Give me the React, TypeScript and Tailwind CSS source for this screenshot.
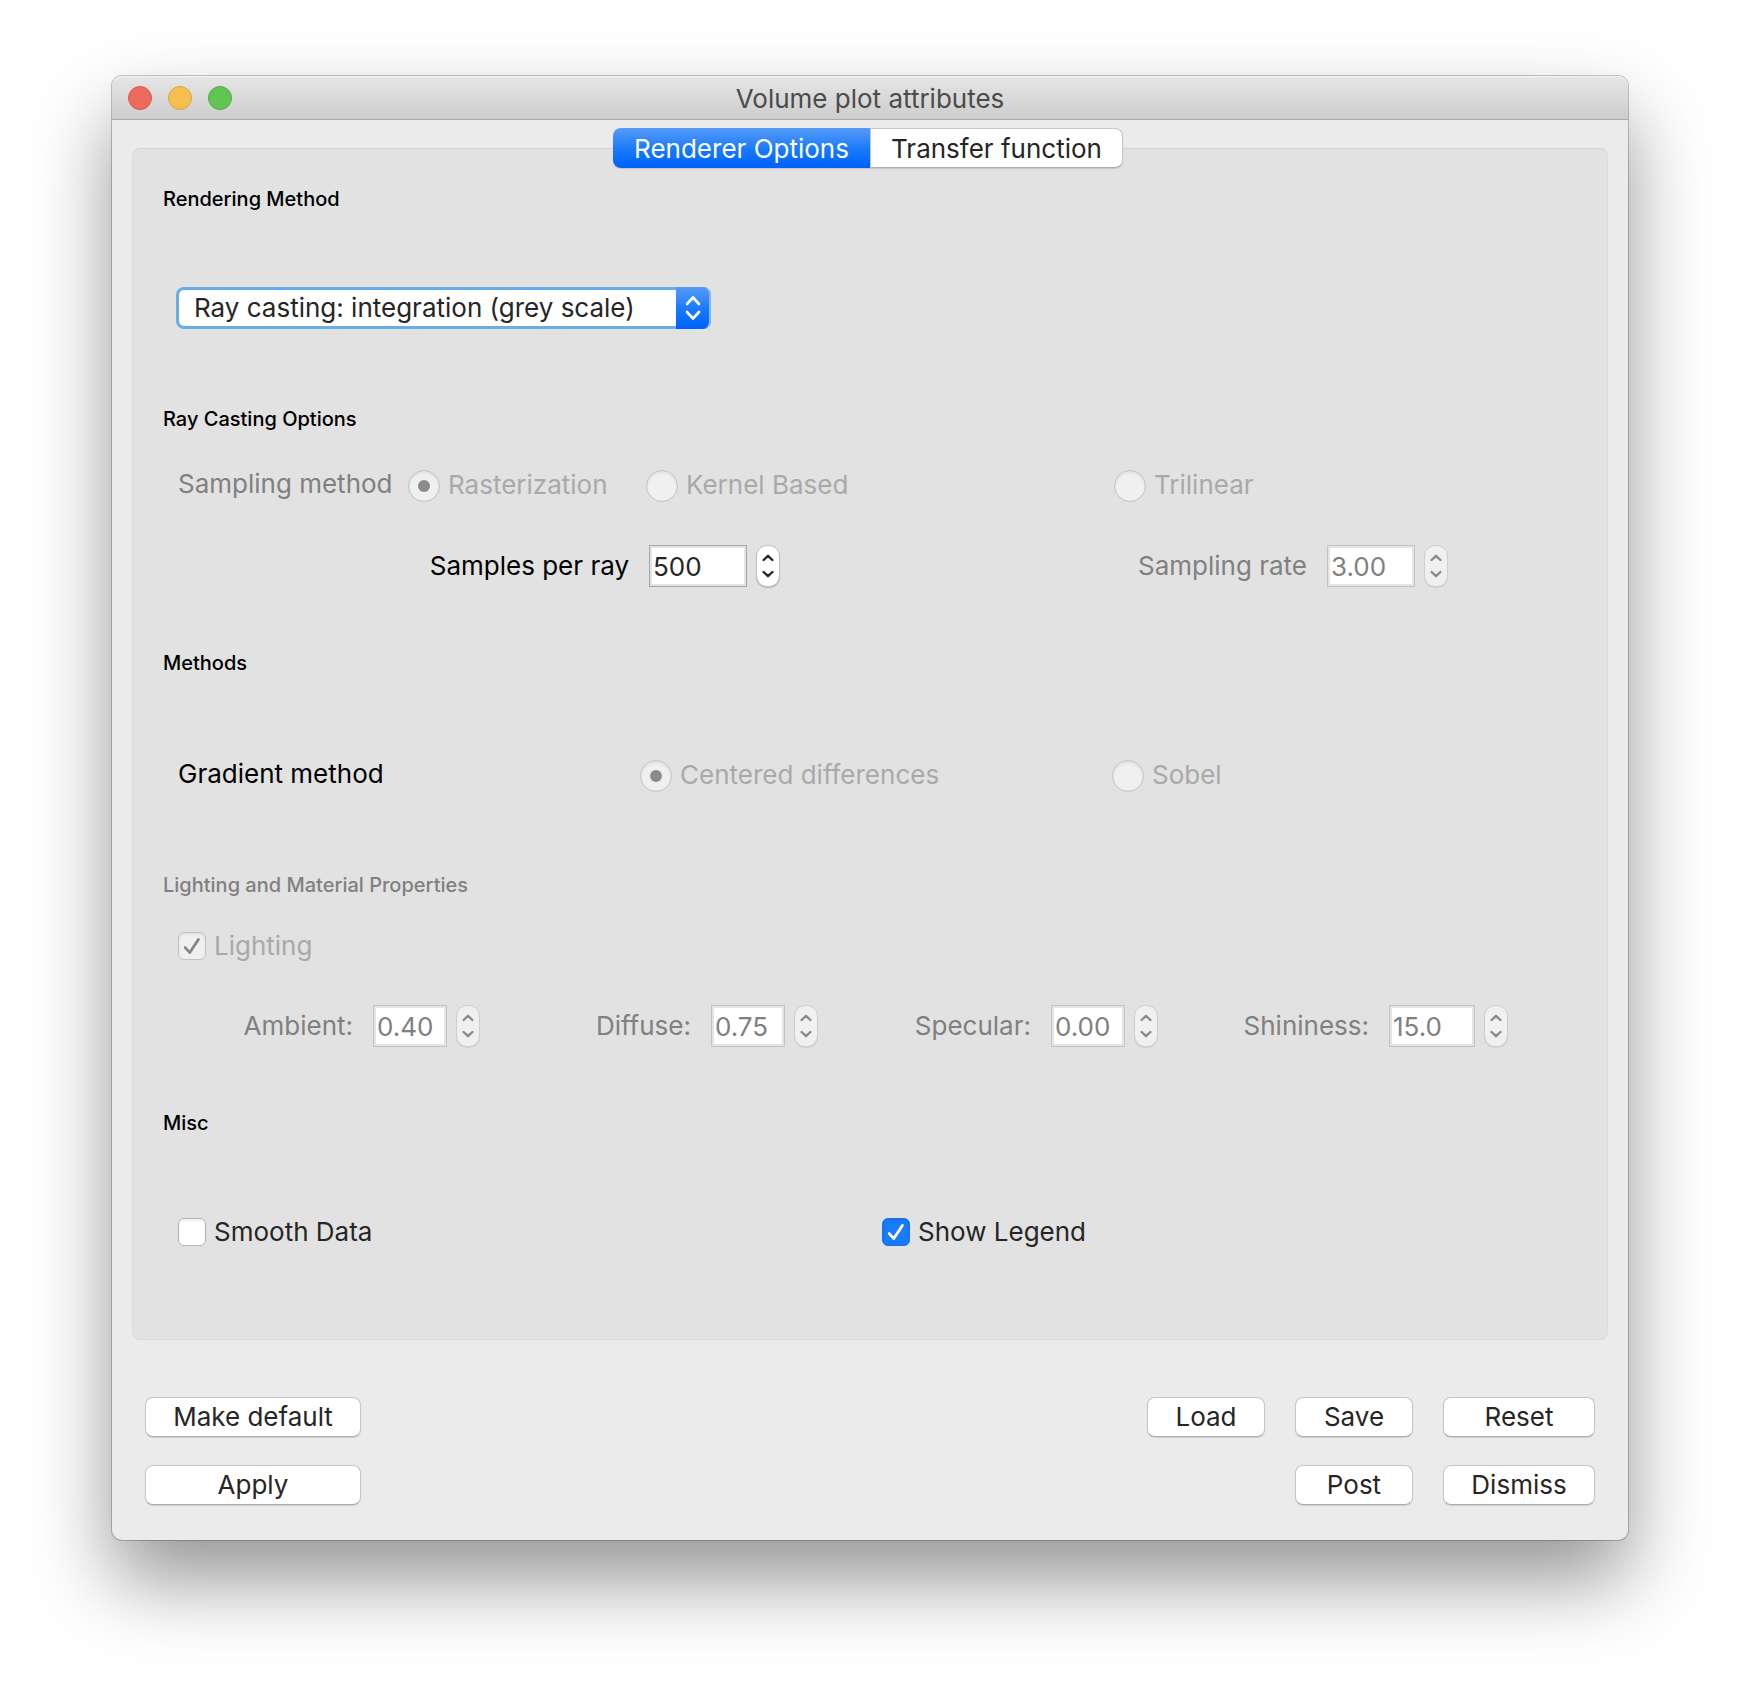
import { useState, type ReactNode } from "react";
import clsx from "clsx";

const lights = [
  { label: "Close", color: "bg-[#ed6a5e] border-[#d8574c]" },
  { label: "Minimize", color: "bg-[#f5bf4f] border-[#dca63c]" },
  { label: "Zoom", color: "bg-[#61c554] border-[#4fab43]" },
];

const methods = [
  "Ray casting: integration (grey scale)",
  "Ray casting: compositing",
  "Ray casting: SLIVR",
  "Splatting",
];

function Chevron({ up }: { up?: boolean }) {
  return (
    <svg viewBox="0 0 12 8" className="w-3 h-2" fill="none" stroke="currentColor" strokeWidth="2.4" strokeLinecap="round" strokeLinejoin="round">
      <path d={up ? "M1.6 6 6 1.8 10.4 6" : "M1.6 2 6 6.2 10.4 2"} />
    </svg>
  );
}

function Section({ title, disabled, className, children }: { title: string; disabled?: boolean; className?: string; children: ReactNode }) {
  return (
    <section>
      <h2 className={clsx("pl-[30px] text-[20px] leading-6 font-medium", disabled ? "text-[#808080]" : "text-black")}>{title}</h2>
      <div className={clsx("pl-[45px]", className)}>{children}</div>
    </section>
  );
}

function Radio({ name, label, checked }: { name: string; label: string; checked?: boolean }) {
  return (
    <label className="flex items-center gap-2 whitespace-nowrap text-[#a9a9a9]">
      <input
        type="radio"
        name={name}
        defaultChecked={checked}
        disabled
        className="appearance-none size-8 shrink-0 grid place-content-center rounded-full border border-[#c2c2c2] bg-[#f0f0f0] shadow-[inset_0_2px_3px_rgba(0,0,0,0.07)] before:size-3 before:rounded-full checked:before:bg-[#8b8b8b]"
      />
      <span className="-my-1 pb-0.5">{label}</span>
    </label>
  );
}

function Checkbox({ label, checked, disabled }: { label: string; checked?: boolean; disabled?: boolean }) {
  return (
    <label className={clsx("flex items-center gap-2 whitespace-nowrap", disabled ? "text-[#a9a9a9]" : "text-[#262626]")}>
      <span className="relative size-7 shrink-0">
        <input
          type="checkbox"
          defaultChecked={checked}
          disabled={disabled}
          className={clsx(
            "peer block appearance-none size-7 rounded-[6px] border shadow-[inset_0_2px_3px_rgba(0,0,0,0.07)]",
            disabled ? "border-[#c2c2c2] bg-[#f0f0f0]" : "border-[#b4b4b4] bg-white checked:border-[#1670f0] checked:bg-[#187bfb]"
          )}
        />
        <svg
          viewBox="0 0 28 28"
          className={clsx("absolute inset-0 size-7 pointer-events-none opacity-0 peer-checked:opacity-100", disabled ? "text-[#868686]" : "text-white")}
          fill="none"
          stroke="currentColor"
          strokeWidth="2.8"
          strokeLinecap="round"
          strokeLinejoin="round"
        >
          <path d="M7.2 15.6 11.8 20.6 20.4 7.4" />
        </svg>
      </span>
      {label}
    </label>
  );
}

function SpinBox({ id, label, value, width, disabled }: { id: string; label: string; value: string; width: string; disabled?: boolean }) {
  const [text, setText] = useState(value);
  const decimals = value.includes(".") ? value.split(".")[1].length : 0;
  const step = (dir: number) => setText((Number(text) + dir * 10 ** -decimals).toFixed(decimals));

  return (
    <div className="flex items-center justify-end">
      <label htmlFor={id} className={clsx("mr-5 whitespace-nowrap", disabled ? "text-[#808080]" : "text-black")}>{label}</label>
      <input
        id={id}
        value={text}
        disabled={disabled}
        onChange={(e) => setText(e.target.value)}
        className={clsx(
          "h-[42px] mr-[9px] pl-[3px] border bg-white outline-none shadow-[inset_0_0_0_2px_#e4e4e4]",
          width,
          disabled ? "border-[#c4c4c4] text-[#808080]" : "border-[#a6a6a6] text-[#262626]"
        )}
      />
      <div
        className={clsx(
          "flex flex-col w-6 h-[42px] rounded-[11px] border",
          disabled ? "border-[#cecece] bg-[#f0f0f0] text-[#8b8b8b] shadow-[0_1px_1px_rgba(0,0,0,0.08)]" : "border-[#c0c0c0] bg-white text-[#262626] shadow-[0_1px_1px_rgba(0,0,0,0.2)]"
        )}
      >
        <button aria-label={`Increase ${label}`} disabled={disabled} onClick={() => step(1)} className="flex-1 flex items-end justify-center pb-1">
          <Chevron up />
        </button>
        <button aria-label={`Decrease ${label}`} disabled={disabled} onClick={() => step(-1)} className="flex-1 flex items-start justify-center pt-1">
          <Chevron />
        </button>
      </div>
    </div>
  );
}

function PushButton({ width, children }: { width: string; children: ReactNode }) {
  return (
    <button className={clsx("h-10 rounded-lg border border-[#c6c6c6] border-b-[#adadad] bg-white text-[#262626] shadow-[0_1px_1px_rgba(0,0,0,0.12)]", width)}>
      {children}
    </button>
  );
}

export default function App() {
  const [tab, setTab] = useState("Renderer Options");

  return (
    <div className="min-h-screen bg-white px-28 pt-[76px] pb-[148px] font-['Inter',sans-serif] text-[26px] leading-8">
      <main className="rounded-[10px] bg-[#ebebeb] shadow-[0_0_0_1px_rgba(0,0,0,0.22),0_40px_80px_rgba(0,0,0,0.42)]">
        <header className="grid grid-cols-[1fr_auto_1fr] items-center h-11 px-4 rounded-t-[10px] border-b border-[#a8a8a8] bg-linear-to-b from-[#e6e6e6] to-[#cdcdcd] shadow-[inset_0_1px_0_#f4f4f4]">
          <div className="flex gap-4">
            {lights.map((l) => (
              <button key={l.label} aria-label={l.label} className={clsx("size-6 rounded-full border", l.color)} />
            ))}
          </div>
          <h1 className="pt-0.5 text-[#4b4b4b]">Volume plot attributes</h1>
        </header>

        <div className="px-5 pt-2">
          <div role="tablist" className="relative z-10 flex justify-center pr-1 -mb-5">
            {["Renderer Options", "Transfer function"].map((name) => (
              <button
                key={name}
                role="tab"
                aria-selected={tab === name}
                onClick={() => setTab(name)}
                className={clsx(
                  "h-10 pt-0.5 border first:w-[257px] last:w-[253px] first:rounded-l-lg last:rounded-r-lg shadow-[0_1px_1px_rgba(0,0,0,0.12)]",
                  tab === name
                    ? "border-transparent bg-linear-to-b from-[#559bf7] via-[#1a7bfa] to-[#0060fb] bg-origin-border text-white"
                    : "border-[#c6c6c6] border-b-[#adadad] bg-white text-[#262626]"
                )}
              >
                {name}
              </button>
            ))}
          </div>

          <div className="rounded-lg border border-[#dadada] border-t-[#d2d2d2] bg-[#e2e2e2] pt-[38px] pb-[91px]">
            <Section title="Rendering Method" className="pt-[76px] pb-[78px]">
              <div className="relative w-[535px] -ml-0.5">
                <select
                  aria-label="Rendering Method"
                  className="block appearance-none w-full h-[42px] pl-[15px] pr-10 rounded-lg border-3 border-[#67aee8] bg-white text-[#262626] outline-none"
                >
                  {methods.map((m) => (
                    <option key={m}>{m}</option>
                  ))}
                </select>
                <span className="absolute inset-y-0 right-0 w-[35px] flex items-center justify-center rounded-r-lg border-r-2 border-[#7db9ee] bg-linear-to-b from-[#559bf7] via-[#1a7bfa] to-[#0060fb] text-white pointer-events-none">
                  <svg viewBox="0 0 16 26" className="w-4 h-[26px]" fill="none" stroke="currentColor" strokeWidth="2.6" strokeLinecap="round" strokeLinejoin="round">
                    <path d="M2 9 8 2.5 14 9M2 17l6 6.5 6-6.5" />
                  </svg>
                </span>
              </div>
            </Section>

            <Section title="Ray Casting Options" className="pt-[39px] pb-16">
              <div className="grid grid-cols-[230fr_238fr_468fr_493fr] items-center">
                <span className="-my-1 pb-1 whitespace-nowrap text-[#808080]">Sampling method</span>
                <Radio name="sampling" label="Rasterization" checked />
                <Radio name="sampling" label="Kernel Based" />
                <Radio name="sampling" label="Trilinear" />
              </div>
              <div className="grid grid-cols-[602fr_668fr_159fr] pt-[43px]">
                <SpinBox id="samples" label="Samples per ray" value="500" width="w-[98px]" />
                <SpinBox id="rate" label="Sampling rate" value="3.00" width="w-[88px]" disabled />
              </div>
            </Section>

            <Section title="Methods" className="pt-[85px] pb-[81px]">
              <div className="grid grid-cols-[462fr_472fr_495fr] items-center">
                <span className="-my-1 pb-1 whitespace-nowrap text-black">Gradient method</span>
                <Radio name="gradient" label="Centered differences" checked />
                <Radio name="gradient" label="Sobel" />
              </div>
            </Section>

            <Section title="Lighting and Material Properties" disabled className="pt-[33px] pb-16">
              <Checkbox label="Lighting" checked disabled />
              <div className="grid grid-cols-[302fr_338fr_340fr_350fr_99fr] pt-[43px]">
                <SpinBox id="ambient" label="Ambient:" value="0.40" width="w-[74px]" disabled />
                <SpinBox id="diffuse" label="Diffuse:" value="0.75" width="w-[74px]" disabled />
                <SpinBox id="specular" label="Specular:" value="0.00" width="w-[74px]" disabled />
                <SpinBox id="shininess" label="Shininess:" value="15.0" width="w-[86px]" disabled />
              </div>
            </Section>

            <Section title="Misc" className="pt-[81px]">
              <div className="grid grid-cols-[704fr_725fr]">
                <Checkbox label="Smooth Data" />
                <Checkbox label="Show Legend" checked />
              </div>
            </Section>
          </div>
        </div>

        <footer className="flex flex-col gap-7 px-[33px] pt-[57px] pb-[35px]">
          <div className="flex justify-between">
            <PushButton width="w-[216px]">Make default</PushButton>
            <div className="flex gap-[30px]">
              <PushButton width="w-[118px]">Load</PushButton>
              <PushButton width="w-[118px]">Save</PushButton>
              <PushButton width="w-[152px]">Reset</PushButton>
            </div>
          </div>
          <div className="flex justify-between">
            <PushButton width="w-[216px]">Apply</PushButton>
            <div className="flex gap-[30px]">
              <PushButton width="w-[118px]">Post</PushButton>
              <PushButton width="w-[152px]">Dismiss</PushButton>
            </div>
          </div>
        </footer>
      </main>
    </div>
  );
}
